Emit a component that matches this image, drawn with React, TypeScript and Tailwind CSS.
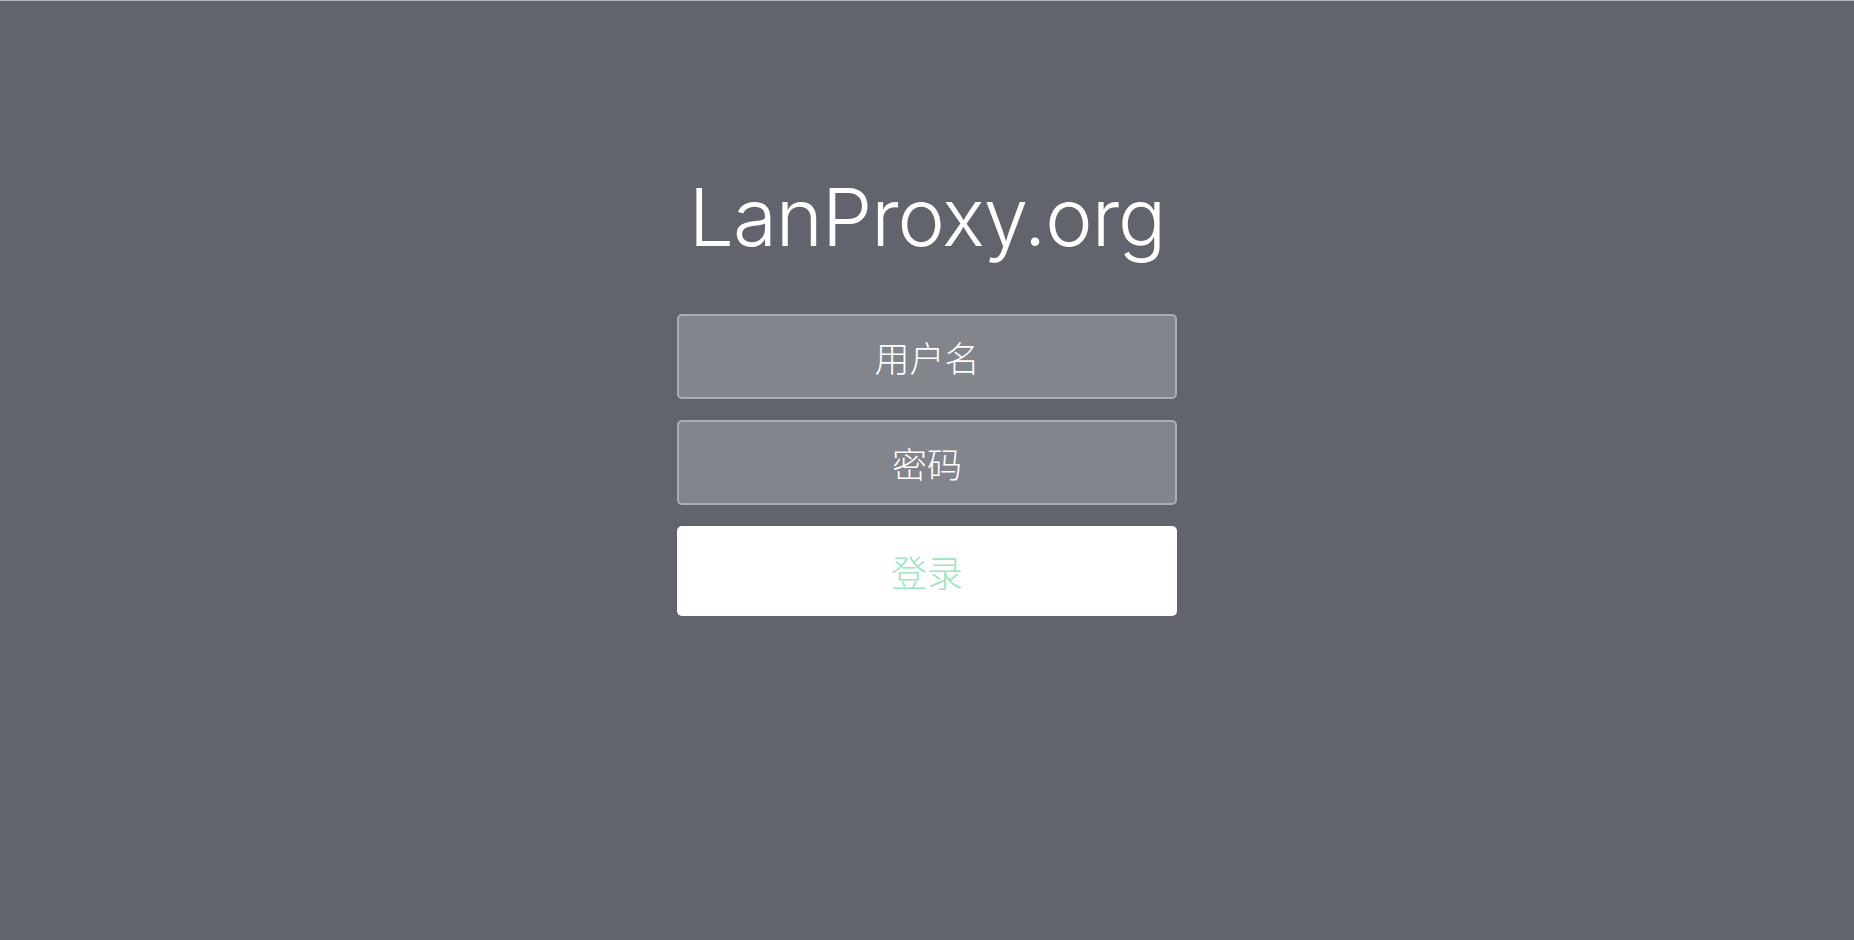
import React, { useState } from "react";

export default function App() {
  const [username, setUsername] = useState("");
  const [password, setPassword] = useState("");

  return (
    <div
      className="min-h-screen w-full bg-[#62646d] border-t border-[#b4b5b8] flex flex-col items-center"
      style={{ fontFamily: '"Noto Sans", "Noto Sans CJK SC", sans-serif' }}
    >
      <h1 className="mt-[176px] h-[80px] text-[80px] leading-none font-light text-white tracking-[-1px] font-['Inter','Noto_Sans',sans-serif]">
        LanProxy.org
      </h1>

      <form
        className="mt-[57px] w-[500px] flex flex-col gap-[21px]"
        onSubmit={(e) => e.preventDefault()}
      >
        <input
          value={username}
          onChange={(e) => setUsername(e.target.value)}
          placeholder="用户名"
          className="h-[85px] w-full rounded-[5px] border-2 border-[#abadb2] bg-[#83858d] text-center text-[35px] text-white placeholder-white outline-none font-['Noto_Sans_CJK_SC',sans-serif] font-light"
        />
        <input
          type="password"
          value={password}
          onChange={(e) => setPassword(e.target.value)}
          placeholder="密码"
          className="h-[85px] w-full rounded-[5px] border-2 border-[#abadb2] bg-[#83858d] text-center text-[35px] text-white placeholder-white outline-none font-['Noto_Sans_CJK_SC',sans-serif] font-light"
        />
        <button
          type="submit"
          className="h-[90px] w-full rounded-[5px] bg-white text-[36px] text-[#9de6bd] font-['Noto_Sans_CJK_SC',sans-serif] font-light"
        >
          登录
        </button>
      </form>
    </div>
  );
}
